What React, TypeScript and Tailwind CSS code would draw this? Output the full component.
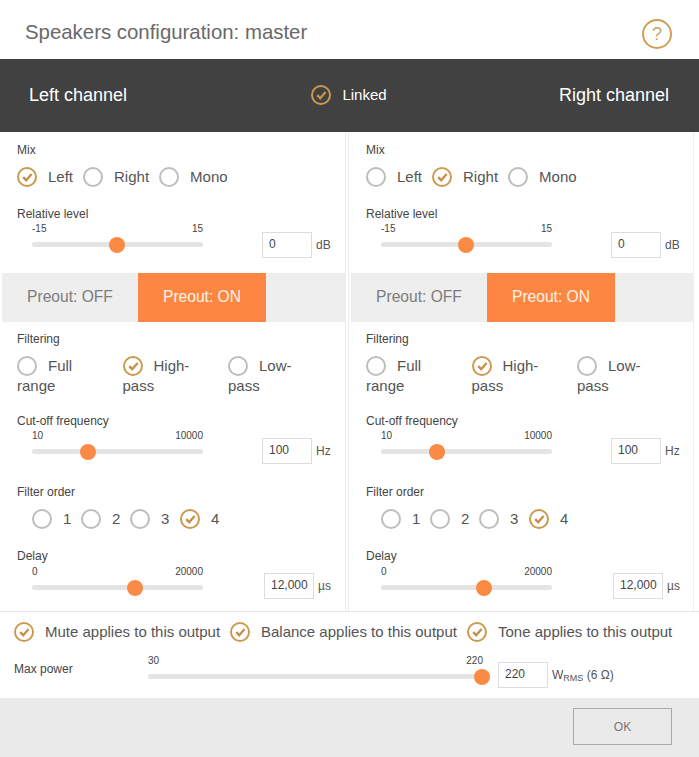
// Speakers configuration dialog

interface RadioProps {
  checked?: boolean
  className?: string
}

function Radio({ checked = false, className = '' }: RadioProps) {
  return (
    <svg viewBox="0 0 20 20" className={`inline-block h-5 w-5 shrink-0 ${className}`} fill="none">
      <circle cx="10" cy="10" r="9" strokeWidth="2" stroke={checked ? '#c99a50' : '#bdbdbd'} />
      {checked && (
        <path d="M6.2 10.2 L9.2 13.2 L14.6 7" stroke="#c98f4c" strokeWidth="2.4" />
      )}
    </svg>
  )
}

function Option({ label, checked, className = '' }: { label: string; checked?: boolean; className?: string }) {
  return (
    <div className={`flex items-center gap-[11px] text-[15px] leading-5 text-[#555] ${className}`}>
      <Radio checked={checked} />
      <span>{label}</span>
    </div>
  )
}

function Label({ children, className = '' }: { children: React.ReactNode; className?: string }) {
  return <div className={`text-xs leading-[14px] text-[#444] ${className}`}>{children}</div>
}

interface SliderProps {
  min: string
  max: string
  thumb: number
  className?: string
  maxClassName?: string
}

function Slider({ min, max, thumb, className = '', maxClassName = '' }: SliderProps) {
  return (
    <div className={className}>
      <div className="flex justify-between text-[10px] leading-3 text-[#444]">
        <span>{min}</span>
        <span className={maxClassName}>{max}</span>
      </div>
      <div className="relative mt-[7px] h-[5px] rounded-full bg-[#e4e4e4]">
        <div
          className="absolute top-[-5.5px] h-4 w-4 -translate-x-1/2 rounded-full bg-[#fb8a44]"
          style={{ left: thumb }}
        />
      </div>
    </div>
  )
}

function ValueBox({ value, unit }: { value: string; unit: React.ReactNode }) {
  return (
    <div className="flex items-center gap-1 text-xs text-[#555]">
      <div className="h-[26px] w-[50px] border border-[#ddd] bg-white pl-1.5 leading-[23px] text-[#444]">
        {value}
      </div>
      <span>{unit}</span>
    </div>
  )
}

function FilterOption({ first, second, checked }: { first: string; second: string; checked?: boolean }) {
  return (
    <div className="w-[95px] text-[15px] leading-5 text-[#555]">
      <Radio checked={checked} className="mr-[11px] align-[-5px]" />
      {first} {second}
    </div>
  )
}

function ChannelPanel({ mix, divider }: { mix: string; divider: string }) {
  return (
    <div className={`w-[346px] border-[#eee] pt-[11px] ${divider}`}>
      <div className="pl-[17px]">
        <Label>Mix</Label>
        <div className="mt-[10px] flex gap-[10px]">
          <Option label="Left" checked={mix === 'Left'} />
          <Option label="Right" checked={mix === 'Right'} />
          <Option label="Mono" checked={mix === 'Mono'} />
        </div>
        <Label className="mt-[20px]">Relative level</Label>
        <div className="flex h-[37px] items-start">
          <Slider min="-15" max="15" thumb={85} className="ml-[15px] mt-[2px] w-[171px]" />
          <div className="ml-[59px] mt-[11px]">
            <ValueBox value="0" unit="dB" />
          </div>
        </div>
      </div>

      <div className="ml-0.5 mt-[15px] flex h-[49px] w-[343px] bg-[#eeeeee] text-[15.6px] leading-[47px]">
        <div className="w-[136px] text-center text-[#7d7d7d]">Preout: OFF</div>
        <div className="w-[128px] bg-[#fd8742] text-center text-[#fff3e8]">Preout: ON</div>
      </div>

      <div className="pl-[17px]">
        <Label className="mt-[10px]">Filtering</Label>
        <div className="mt-[10px] flex gap-[10.5px]">
          <FilterOption first="Full" second="range" />
          <FilterOption first="High-" second="pass" checked />
          <FilterOption first="Low-" second="pass" />
        </div>

        <Label className="mt-[18px]">Cut-off frequency</Label>
        <div className="flex h-[42px] items-start">
          <Slider min="10" max="10000" thumb={56} className="ml-[15px] mt-[2px] w-[171px]" />
          <div className="ml-[59px] mt-[10px]">
            <ValueBox value="100" unit="Hz" />
          </div>
        </div>

        <Label className="mt-[15px]">Filter order</Label>
        <div className="ml-[15px] mt-[10px] flex">
          <Option label="1" className="w-[49px]" />
          <Option label="2" className="w-[49px]" />
          <Option label="3" className="w-[50px]" />
          <Option label="4" checked />
        </div>

        <Label className="mt-[20px]">Delay</Label>
        <div className="flex h-[40px] items-start">
          <Slider min="0" max="20000" thumb={103} className="ml-[15px] mt-[3px] w-[171px]" />
          <div className="ml-[61px] mt-[10px]">
            <ValueBox value="12,000" unit="µs" />
          </div>
        </div>
      </div>
    </div>
  )
}

export default function App() {
  return (
    <div className="h-[757px] w-[699px] overflow-hidden bg-white font-['Liberation_Sans',Arial,sans-serif]">
      <header className="flex h-[59px] items-start justify-between pl-[25px] pr-[27px]">
        <h1 className="mt-[18px] text-[20.4px] leading-[28px] text-[#696969]">Speakers configuration: master</h1>
        <div className="mt-[19px] flex h-[30px] w-[30px] items-center justify-center rounded-full border-2 border-[#cf9f55] text-lg text-[#c9a468]">
          ?
        </div>
      </header>

      <div className="flex h-[73px] items-center justify-between bg-[#414141] pb-[2px] pl-[29px] pr-[30px] text-white">
        <span className="w-[200px] text-lg">Left channel</span>
        <div className="flex items-center gap-[11px] text-[15px] leading-5">
          <Radio checked />
          <span>Linked</span>
        </div>
        <span className="w-[200px] text-right text-lg">Right channel</span>
      </div>

      <div className="flex h-[480px] gap-[2px] border-b border-[#e8e8e8]">
        <ChannelPanel mix="Left" divider="border-r" />
        <ChannelPanel mix="Right" divider="border-l border-r" />
      </div>

      <div className="h-[86px] pl-[14px]">
        <div className="flex pt-[10px] text-[15px]">
          <Option label="Mute applies to this output" checked className="w-[216px]" />
          <Option label="Balance applies to this output" checked className="w-[237px]" />
          <Option label="Tone applies to this output" checked />
        </div>
        <div className="flex">
          <div className="mt-[19px] w-[134px] text-xs text-[#444]">Max power</div>
          <Slider min="30" max="220" thumb={334} maxClassName="mr-[7px]" className="mt-[13px] w-[342px]" />
          <div className="ml-2 mt-[20px]">
            <ValueBox
              value="220"
              unit={
                <span className="text-xs">
                  W<sub className="text-[9px]">RMS</sub> (6 Ω)
                </span>
              }
            />
          </div>
        </div>
      </div>

      <footer className="flex h-[59px] items-start justify-end bg-[#eaeaea] pr-[27px] pt-[10px]">
        <button className="h-[37px] w-[99px] border border-[#aaa] text-xs text-[#777]">OK</button>
      </footer>
    </div>
  )
}
